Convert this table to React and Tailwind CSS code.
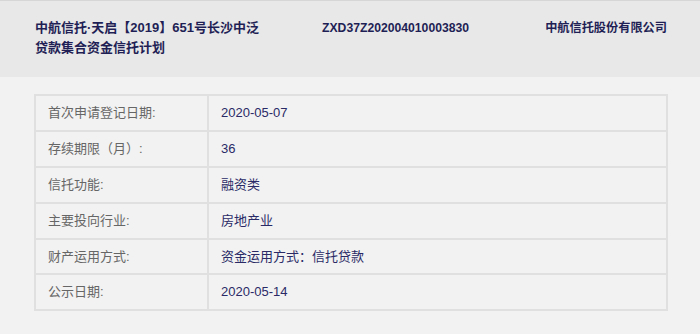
import React from "react";

const rows = [
  { label: "首次申请登记日期:", value: "2020-05-07", h: "h-[34px]" },
  { label: "存续期限（月）:", value: "36", h: "h-[36px]" },
  { label: "信托功能:", value: "融资类", h: "h-[36px]" },
  { label: "主要投向行业:", value: "房地产业", h: "h-[36px]" },
  { label: "财产运用方式:", value: "资金运用方式：信托贷款", h: "h-[35px]" },
  { label: "公示日期:", value: "2020-05-14", h: "h-[36px]" },
];

const App = () => {
  return (
    <div className="w-[700px] h-[334px] bg-[#f2f2f2] font-['Liberation_Sans','Noto_Sans_CJK_SC',sans-serif] text-[13px] overflow-hidden">
      {/* Header */}
      <div className="h-[77px] bg-[#e8e8e8] border-t border-[#d6d6d6] flex pl-[35px] pr-[33px] pt-[17px] font-bold text-[#1f1f55] leading-[20px]">
        <div className="w-[232px]">中航信托·天启【2019】651号长沙中泛贷款集合资金信托计划</div>
        <div className="ml-[55px] text-[12.2px]">ZXD37Z202004010003830</div>
        <div className="ml-auto text-[12.2px]">中航信托股份有限公司</div>
      </div>

      {/* Info table */}
      <div className="mt-[17px] ml-[34px] w-[634px] border-2 border-[#e0e0e0]">
        {rows.map((r, i) => (
          <div
            key={r.label}
            className={`flex ${r.h} items-center ${i > 0 ? "border-t-2 border-[#e0e0e0]" : ""}`}
          >
            <div className="w-[173px] h-full flex items-center pl-[12px] text-[#666666] border-r-2 border-[#e0e0e0]">
              {r.label}
            </div>
            <div className="flex-1 pl-[12px] text-[#2a2a66]">{r.value}</div>
          </div>
        ))}
      </div>
    </div>
  );
};

export default App;
